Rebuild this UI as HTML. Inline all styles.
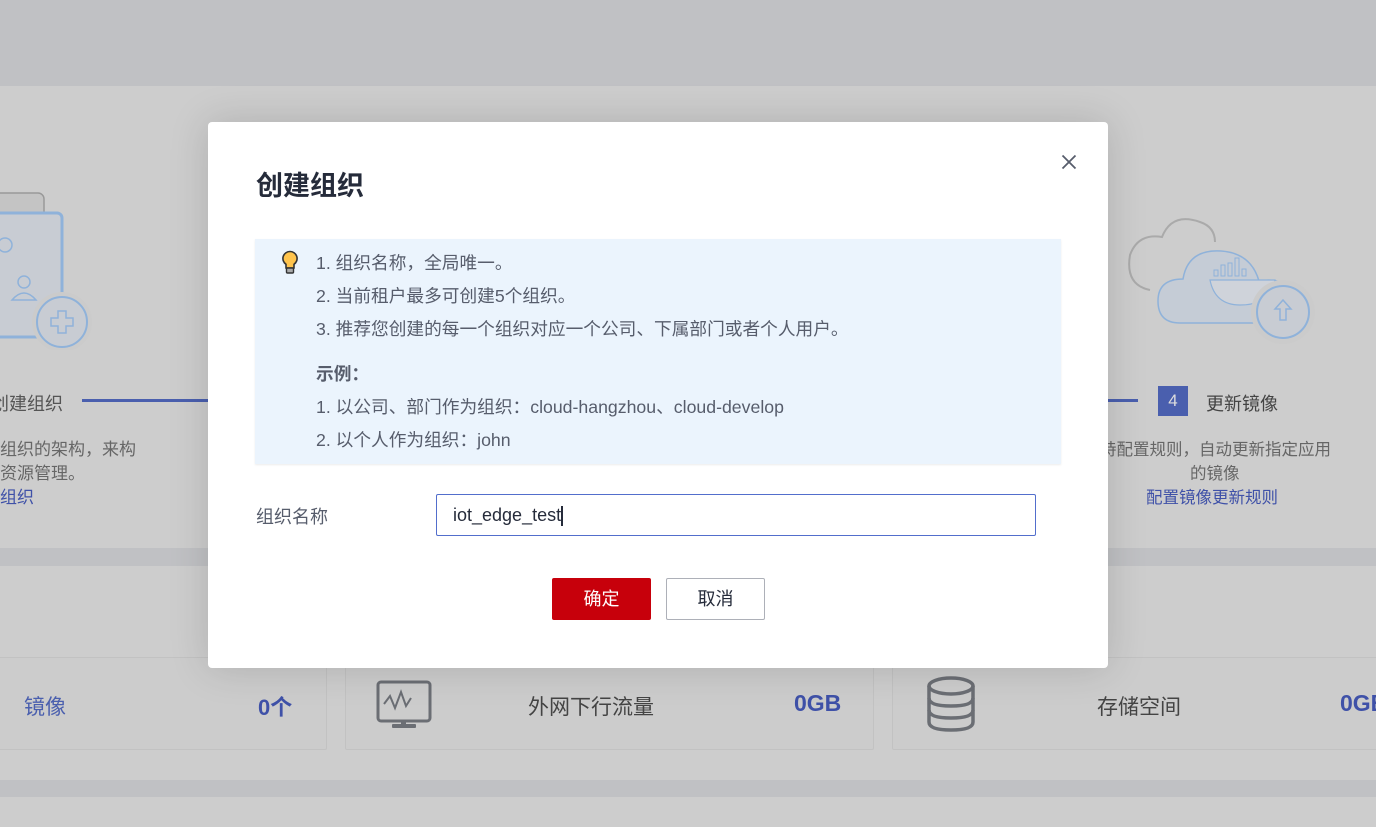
<!DOCTYPE html>
<html><head><meta charset="utf-8">
<style>
*{margin:0;padding:0;box-sizing:border-box}
body{width:1376px;height:827px;overflow:hidden;position:relative;background:#cdcdcd;font-family:"Liberation Sans","Noto Sans CJK SC",sans-serif;}
.abs{position:absolute}
.strip{background:#c0c1c4;left:0;width:1376px}
.card{position:absolute;top:657px;height:93px;border:1px solid #c2c2c2;border-radius:2px;background:#cccccc}
.dlg{position:absolute;left:208px;top:122px;width:900px;height:546px;background:#fff;border-radius:4px;box-shadow:0 0 40px rgba(0,0,0,.15)}
.tip{position:absolute;left:47px;top:117px;width:806px;height:225px;background:#ebf4fd;box-shadow:0 1px 2px rgba(0,0,0,.08)}
.tip p{position:absolute;left:61px;font-size:17.7px;color:#575d6c;white-space:nowrap;line-height:20px}
</style></head><body>
<div class="abs strip" style="top:0;height:86px"></div>
<div class="abs strip" style="top:548px;height:18px"></div>
<div class="abs strip" style="top:780px;height:17px"></div>

<svg class="abs" style="left:0;top:185px" width="100" height="165" viewBox="0 0 100 165">
<rect x="-20" y="8" width="64" height="50" rx="6" fill="#c4c4c4" stroke="#999" stroke-width="1.5"/>
<rect x="-20" y="28" width="82" height="124" rx="5" fill="#c8ccd3" stroke="#8fb2da" stroke-width="3"/>
<circle cx="5" cy="60" r="7" fill="none" stroke="#8fb2da" stroke-width="1.5"/>
<circle cx="24" cy="97" r="6" fill="none" stroke="#8fb2da" stroke-width="1.5"/>
<path d="M12 115 q12-14 24 0z" fill="none" stroke="#8fb2da" stroke-width="1.5"/>
<circle cx="62" cy="137" r="30" fill="#cbcbcb"/>
<circle cx="62" cy="137" r="25" fill="#c8ccd3" stroke="#8fb2da" stroke-width="2"/>
<path d="M58 126h8v7h7v8h-7v7h-8v-7h-7v-8h7z" fill="none" stroke="#8fb2da" stroke-width="1.5"/>
</svg>
<div class="abs" style="left:-9px;top:390px;font-size:18px;color:#555">创建组织</div>
<div class="abs" style="left:82px;top:399px;width:126px;height:3px;background:#4a5fae"></div>
<div class="abs" style="left:0;top:438px;font-size:17px;color:#666;line-height:24px">组织的架构，来构<br>资源管理。<br><span style="color:#3f51a8">组织</span></div>

<svg class="abs" style="left:1120px;top:205px" width="200" height="150" viewBox="0 0 200 150">
<path d="M30 85 q-25-5-20-35 q8-22 32-18 q10-25 38-15 q15 5 15 20" fill="none" stroke="#aaa" stroke-width="2"/>
<path d="M60 118 q-22 0-22-22 q0-22 25-22 q5-30 38-28 q30 2 38 30 q30-5 40 20 q5 22-18 22z" fill="#c5ccd6" stroke="#8fb2da" stroke-width="1.5"/>
<path d="M90 75 h65 q-5 25-35 25 q-25 0-30-25z" fill="#cfd3da" stroke="#8fb2da" stroke-width="1.2"/>
<rect x="94" y="65" width="4" height="6" fill="none" stroke="#8fb2da"/><rect x="101" y="60" width="4" height="11" fill="none" stroke="#8fb2da"/><rect x="108" y="58" width="4" height="13" fill="none" stroke="#8fb2da"/><rect x="115" y="53" width="4" height="18" fill="none" stroke="#8fb2da"/><rect x="122" y="64" width="4" height="7" fill="none" stroke="#8fb2da"/>
<circle cx="163" cy="107" r="32" fill="#cbcbcb"/>
<circle cx="163" cy="107" r="26" fill="#c8ccd3" stroke="#8fb2da" stroke-width="2"/>
<path d="M163 95 l-8 9h5v11h6v-11h5z" fill="none" stroke="#8fb2da" stroke-width="1.5"/>
</svg>
<div class="abs" style="left:1108px;top:399px;width:30px;height:3px;background:#4a5fae"></div>
<div class="abs" style="left:1158px;top:386px;width:30px;height:30px;background:#4a5fae;color:#ddd;font-size:17px;text-align:center;line-height:30px">4</div>
<div class="abs" style="left:1206px;top:390px;font-size:18px;color:#444">更新镜像</div>
<div class="abs" style="left:1100px;top:438px;width:290px;font-size:16.5px;color:#666;line-height:24px;text-align:left;white-space:nowrap">持配置规则，自动更新指定应用<br><span style="margin-left:90px">的镜像</span><br><span style="margin-left:46px;color:#3f51a8">配置镜像更新规则</span></div>

<div class="card" style="left:-5px;width:332px"></div>
<div class="abs" style="left:24px;top:691px;font-size:21px;color:#4a5fae">镜像</div>
<div class="abs" style="left:258px;top:690px;font-size:22px;font-weight:bold;color:#3f51a8">0个</div>
<div class="card" style="left:345px;width:529px"></div>
<svg class="abs" style="left:376px;top:680px" width="56" height="50" viewBox="0 0 56 50"><rect x="2" y="2" width="52" height="39" rx="3" fill="none" stroke="#6b6e74" stroke-width="3"/><path d="M8 24 l6-8 5 12 6-16 5 14 5-8" fill="none" stroke="#6b6e74" stroke-width="2"/><rect x="25" y="41" width="5" height="4" fill="#6b6e74"/><rect x="16" y="44" width="24" height="4" rx="1" fill="#6b6e74"/></svg>
<div class="abs" style="left:528px;top:691px;font-size:21px;color:#444">外网下行流量</div>
<div class="abs" style="left:794px;top:690px;font-size:23px;font-weight:bold;color:#3f51a8">0GB</div>
<div class="card" style="left:892px;width:500px"></div>
<svg class="abs" style="left:925px;top:675px" width="52" height="58" viewBox="0 0 52 58"><g fill="none" stroke="#6b6e74" stroke-width="3.5"><ellipse cx="26" cy="11" rx="22" ry="8"/><path d="M4 11v36q0 8 22 8t22-8v-36"/><path d="M4 23q0 8 22 8t22-8M4 35q0 8 22 8t22-8"/></g></svg>
<div class="abs" style="left:1097px;top:691px;font-size:21px;color:#444">存储空间</div>
<div class="abs" style="left:1340px;top:690px;font-size:23px;font-weight:bold;color:#3f51a8">0GB</div>

<div class="dlg">
<div class="abs" style="left:48px;top:42px;font-size:27px;font-weight:bold;color:#252b3a">创建组织</div>
<svg class="abs" style="left:853px;top:32px" width="16" height="16" viewBox="0 0 16 16"><path d="M1.5 1.5l13 13M14.5 1.5l-13 13" stroke="#575d6c" stroke-width="1.8"/></svg>
<div class="tip">
<svg class="abs" style="left:26px;top:11px" width="18" height="26" viewBox="0 0 18 26"><path d="M9 1.5a7 7 0 0 0-4 12.8v3.7h8v-3.7A7 7 0 0 0 9 1.5z" fill="#ffc44d" stroke="#333" stroke-width="1.6"/><rect x="5.5" y="18" width="7" height="5" rx="1" fill="#aaa" stroke="#333" stroke-width="1.4"/></svg>
<p style="top:14px">1. 组织名称，全局唯一。</p>
<p style="top:47px">2. 当前租户最多可创建5个组织。</p>
<p style="top:80px">3. 推荐您创建的每一个组织对应一个公司、下属部门或者个人用户。</p>
<p style="top:125px;font-weight:bold">示例：</p>
<p style="top:158px">1. 以公司、部门作为组织：cloud-hangzhou、cloud-develop</p>
<p style="top:191px">2. 以个人作为组织：john</p>
</div>
<div class="abs" style="left:48px;top:381px;font-size:18px;color:#575d6c">组织名称</div>
<div class="abs" style="left:228px;top:372px;width:600px;height:42px;border:1px solid #526ecc;border-radius:2px;font-size:18px;color:#252b3a;padding-left:16px;line-height:40px">iot_edge_test<span style="display:inline-block;width:2px;height:20px;background:#252b3a;vertical-align:middle"></span></div>
<div class="abs" style="left:344px;top:456px;width:99px;height:42px;background:#c7000b;border-radius:2px;color:#fff;font-size:18px;text-align:center;line-height:42px">确定</div>
<div class="abs" style="left:458px;top:456px;width:99px;height:42px;border:1px solid #adb0b8;border-radius:2px;color:#252b3a;font-size:18px;text-align:center;line-height:40px">取消</div>
</div>
</body></html>
